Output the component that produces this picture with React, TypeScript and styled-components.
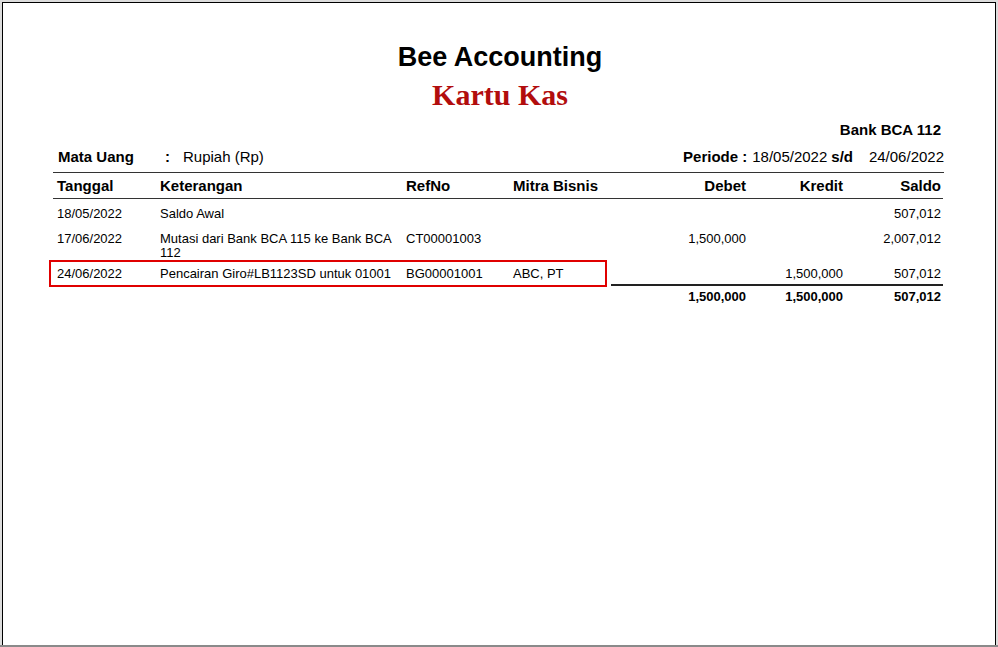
import React from "react";
import styled, { createGlobalStyle } from "styled-components";

const Global = createGlobalStyle`
  html, body { margin: 0; padding: 0; background: #dcdcdc; }
  body { font-family: "Liberation Sans", Arial, sans-serif; color: #000; }
`;

const Frame = styled.div`
  box-sizing: border-box;
  width: 998px;
  height: 647px;
  padding: 2px 2px 0 2px;
  border-bottom: 2px solid #8a8a8a;
`;

const Sheet = styled.div`
  box-sizing: border-box;
  height: 643px;
  background: #fff;
  border: 1px solid #000;
  border-bottom: none;
  padding: 39px 0 0 50px;
`;

const Title = styled.h1`
  margin: 0;
  width: 894px;
  text-align: center;
  font: bold 27px "Liberation Sans", Arial, sans-serif;
  line-height: 30px;
`;

const Subtitle = styled.h2`
  margin: 5px 0 0;
  width: 894px;
  text-align: center;
  font: bold 30px "Liberation Serif", "Times New Roman", serif;
  color: #b20d0d;
  line-height: 36px;
`;

const Block = styled.div`
  width: 890px;
  font-size: 13px;
`;

const BankLine = styled.div`
  text-align: right;
  font-weight: bold;
  font-size: 15px;
  padding-right: 2px;
  margin-top: 8px;
  line-height: 18px;
`;

const InfoLine = styled.div`
  display: flex;
  align-items: baseline;
  justify-content: space-between;
  padding: 9px 0 6px 5px;
  margin-right: -1px;
  line-height: 18px;
  border-bottom: 1px solid #333;
  font-size: 15px;
`;

const Info = styled.div`
  display: flex;
  align-items: baseline;
`;

const Label = styled.span<{ $w?: number }>`
  font-weight: bold;
  display: inline-block;
  width: ${(p) => (p.$w ? `${p.$w}px` : "auto")};
`;

const Colon = styled.span`
  font-weight: bold;
  margin-right: 13px;
`;

const Gap = styled.span<{ $w: number }>`
  display: inline-block;
  width: ${(p) => p.$w}px;
`;

const EndDate = styled.span`
  display: inline-block;
  width: 91px;
  text-align: right;
`;

const Row = styled.div<{ $bold?: boolean }>`
  position: relative;
  display: grid;
  grid-template-columns: 103px 246px 107px 113px 120px 97px 98px;
  padding: 0 2px 0 4px;
  font-size: 13px;
  line-height: 14px;
  font-weight: ${(p) => (p.$bold ? "bold" : "normal")};
`;

const HeadRow = styled(Row)`
  font-size: 15px;
  font-weight: bold;
  line-height: 16px;
  padding-top: 5px;
  padding-bottom: 4px;
  border-bottom: 1px solid #333;
  margin-bottom: 8px;
`;

const Cell = styled.div<{ $right?: boolean }>`
  text-align: ${(p) => (p.$right ? "right" : "left")};
`;

const DataRow = styled(Row)<{ $h: number }>`
  min-height: ${(p) => p.$h}px;
`;

const Highlight = styled.div`
  position: absolute;
  left: -4px;
  top: -7px;
  width: 558px;
  height: 27px;
  box-sizing: border-box;
  border: 2px solid #e00000;
  pointer-events: none;
`;

const TotalRow = styled(Row)`
  padding-top: 4px;
`;

const TotalLine = styled.div`
  grid-column: 4 / 8;
  margin-left: 98px;
  margin-right: -2px;
  border-top: 2px solid #222;
  height: 0;
`;

type R = { d: string; k: string; r: string; m: string; db: string; kr: string; s: string; h: number; hl?: boolean };

const rows: R[] = [
  { d: "18/05/2022", k: "Saldo Awal", r: "", m: "", db: "", kr: "", s: "507,012", h: 25 },
  { d: "17/06/2022", k: "Mutasi dari Bank BCA 115 ke Bank BCA 112", r: "CT00001003", m: "", db: "1,500,000", kr: "", s: "2,007,012", h: 35 },
  { d: "24/06/2022", k: "Pencairan Giro#LB1123SD untuk 01001", r: "BG00001001", m: "ABC, PT", db: "", kr: "1,500,000", s: "507,012", h: 17, hl: true },
];

export default function App() {
  return (
    <>
      <Global />
      <Frame>
        <Sheet>
          <Title>Bee Accounting</Title>
          <Subtitle>Kartu Kas</Subtitle>
          <Block>
            <BankLine>Bank BCA 112</BankLine>
            <InfoLine>
              <Info>
                <Label $w={107}>Mata Uang</Label>
                <Colon>:</Colon>
                <span>Rupiah (Rp)</span>
              </Info>
              <Info>
                <Label>Periode :</Label>
                <Gap $w={5} />
                <span>18/05/2022</span>
                <Gap $w={4} />
                <Label>s/d</Label>
                <EndDate>24/06/2022</EndDate>
              </Info>
            </InfoLine>
            <HeadRow>
              <Cell>Tanggal</Cell>
              <Cell>Keterangan</Cell>
              <Cell>RefNo</Cell>
              <Cell>Mitra Bisnis</Cell>
              <Cell $right>Debet</Cell>
              <Cell $right>Kredit</Cell>
              <Cell $right>Saldo</Cell>
            </HeadRow>
            {rows.map((r) => (
              <DataRow key={r.d} $h={r.h}>
                {r.hl && <Highlight />}
                <Cell>{r.d}</Cell>
                <Cell>{r.k}</Cell>
                <Cell>{r.r}</Cell>
                <Cell>{r.m}</Cell>
                <Cell $right>{r.db}</Cell>
                <Cell $right>{r.kr}</Cell>
                <Cell $right>{r.s}</Cell>
              </DataRow>
            ))}
            <Row>
              <TotalLine />
            </Row>
            <TotalRow $bold>
              <Cell />
              <Cell />
              <Cell />
              <Cell />
              <Cell $right>1,500,000</Cell>
              <Cell $right>1,500,000</Cell>
              <Cell $right>507,012</Cell>
            </TotalRow>
          </Block>
        </Sheet>
      </Frame>
    </>
  );
}
